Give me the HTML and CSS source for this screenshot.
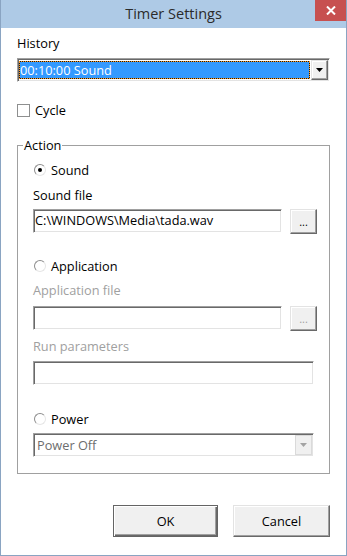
FILE: index.html
```html
<!DOCTYPE html>
<html lang="en">
  <head>
    <meta charset="UTF-8">
    <meta name="viewport" content="width=device-width, initial-scale=1.0">
    <title>Timer Settings</title>
    <link rel="stylesheet" href="styles.css">
  </head>
  <body>
    <div class="window">
        <div class="titlebar">
            <div class="title">Timer Settings</div>
            <div class="close-btn">
                <svg width="10" height="9" viewBox="0 0 10 9">
                    <path d="M1 0.5 L9 8.5 M9 0.5 L1 8.5" stroke="#fff" stroke-width="2" fill="none"/>
                </svg>
            </div>
        </div>

        <div class="content">
            <div class="label label-history">History</div>
            <div class="combo combo-active">
                <div class="combo-value">00:10:00 Sound</div>
                <div class="combo-btn">
                    <svg width="7" height="4" viewBox="0 0 7 4"><polygon points="0,0 7,0 3.5,4" fill="#000"/></svg>
                </div>
            </div>

            <div class="check-row">
                <span class="checkbox"></span>
                <span>Cycle</span>
            </div>

            <fieldset class="group">
                <legend>Action</legend>

                <div class="radio-row">
                    <span class="radio checked"></span>
                    <span>Sound</span>
                </div>
                <div class="label label-sub">Sound file</div>
                <div class="file-row">
                    <div class="textbox">C:\WINDOWS\Media\tada.wav</div>
                    <div class="btn btn-browse">...</div>
                </div>

                <div class="radio-row radio-gap">
                    <span class="radio"></span>
                    <span>Application</span>
                </div>
                <div class="label label-sub-app disabled">Application file</div>
                <div class="file-row file-row-app">
                    <div class="textbox"></div>
                    <div class="btn btn-browse disabled">...</div>
                </div>
                <div class="label label-params disabled">Run parameters</div>
                <div class="textbox textbox-wide"></div>

                <div class="radio-row radio-gap-power">
                    <span class="radio"></span>
                    <span>Power</span>
                </div>
                <div class="combo combo-disabled">
                    <div class="combo-text">Power Off</div>
                    <div class="combo-btn combo-btn-disabled">
                        <svg width="7" height="4" viewBox="0 0 7 4"><polygon points="0,0 7,0 3.5,4" fill="#a3a3a3"/></svg>
                    </div>
                </div>
            </fieldset>

            <div class="actions">
                <div class="btn btn-dialog btn-default">OK</div>
                <div class="btn btn-dialog btn-cancel">Cancel</div>
            </div>
        </div>
    </div>
  </body>
</html>
```

FILE: styles.css
```css
:root {
    --title-bg: #aecae6;
    --frame: #8aa4c2;
    --close-bg: #c75050;
    --face: #f0f0f0;
    --shadow-dark: #696969;
    --shadow: #a0a0a0;
    --light: #e3e3e3;
    --text-disabled: #a0a0a0;
}

body {
    margin: 0;
    font-family: "Open Sans", "Noto Sans", sans-serif;
    font-size: 12.75px;
    color: #000;
    background: #fff;
}

.window {
    width: 347px;
    height: 556px;
    box-sizing: border-box;
    border: 1px solid var(--frame);
    border-top: 0;
    overflow: hidden;
}

/* title bar */
.titlebar {
    height: 28px;
    background: var(--title-bg);
    display: grid;
    grid-template-columns: 1fr auto 1fr;
    align-items: start;
}

.title {
    grid-column: 2;
    font-size: 14.5px;
    line-height: 28px;
    color: #2b2b2b;
}

.close-btn {
    grid-column: 3;
    justify-self: end;
    width: 31px;
    height: 21px;
    background: var(--close-bg);
    display: flex;
    align-items: center;
    justify-content: center;
}

/* content */
.content {
    padding: 0 16px;
}

.label {
    line-height: 16px;
}

.label-history {
    margin-top: 7px;
}

.disabled {
    color: var(--text-disabled);
}

/* sunken controls */
.combo,
.textbox {
    box-sizing: border-box;
    height: 24px;
    border: 1px solid;
    border-color: var(--shadow) #fff #fff var(--shadow);
    box-shadow: inset 1px 1px 0 var(--shadow-dark), inset -1px -1px 0 var(--light);
    background: #fff;
}

.combo {
    display: flex;
    padding: 1px;
}

.combo-active {
    margin-top: 7px;
}

.combo-value {
    flex: 1;
    margin: 1px 1px 1px 0;
    border: 1px dotted #ff9a1f;
    background: linear-gradient(#3399ff, #3399ff) padding-box, #1b1b1b;
    color: #fff;
    line-height: 16px;
}

.combo-btn {
    width: 17px;
    box-sizing: border-box;
    background: var(--face);
    border: 1px solid;
    border-color: var(--light) var(--shadow-dark) var(--shadow-dark) var(--light);
    box-shadow: inset -1px -1px 0 var(--shadow), inset 1px 1px 0 #fff;
    display: flex;
    align-items: center;
    justify-content: center;
}

.combo-disabled {
    margin-top: 6px;
}

.combo-text {
    flex: 1;
    padding-left: 2px;
    line-height: 20px;
    color: #6d6d6d;
}

.combo-btn-disabled {
    border-color: #dadada;
    box-shadow: none;
}

/* checkbox */
.check-row {
    margin-top: 20px;
    display: flex;
    align-items: center;
    gap: 5px;
    line-height: 16px;
}

.checkbox {
    width: 13px;
    height: 13px;
    box-sizing: border-box;
    border: 1px solid #8e8f8f;
    background: #fff;
}

/* group box */
.group {
    margin: 20px 0 0;
    padding: 9px 15px 16px;
    border: 1px solid var(--shadow);
    min-width: 0;
}

.group legend {
    padding: 0 1px;
    margin-left: -10px;
    line-height: 15px;
}

.radio-row {
    display: flex;
    align-items: center;
    gap: 5px;
    line-height: 16px;
    padding-left: 1px;
}

.radio {
    width: 12px;
    height: 12px;
    box-sizing: border-box;
    border-radius: 50%;
    border: 1px solid;
    border-color: #8d8d8d #e6e6e6 #e6e6e6 #8d8d8d;
    background: #fff;
    display: flex;
    align-items: center;
    justify-content: center;
}

.radio.checked::after {
    content: '';
    width: 4px;
    height: 4px;
    border-radius: 50%;
    background: #000;
}

.radio-gap {
    margin-top: 24px;
}

.radio-gap-power {
    margin-top: 26px;
}

.label-sub {
    margin-top: 9px;
}

.label-sub-app {
    margin-top: 8px;
}

.label-params {
    margin-top: 7px;
}

.file-row {
    margin-top: 6px;
    display: flex;
    align-items: flex-start;
    gap: 8px;
}

.file-row-app {
    margin-top: 8px;
}

.file-row .textbox {
    width: 249px;
    flex-shrink: 0;
}

.textbox {
    padding-left: 1px;
    line-height: 20px;
    white-space: nowrap;
}

.textbox-wide {
    margin-top: 7px;
}

/* raised buttons */
.btn {
    box-sizing: border-box;
    background: var(--face);
    border: 1px solid;
    border-color: var(--light) var(--shadow-dark) var(--shadow-dark) var(--light);
    box-shadow: inset -1px -1px 0 var(--shadow), inset 1px 1px 0 #fff;
    display: flex;
    align-items: center;
    justify-content: center;
}

.btn-browse {
    width: 27px;
    height: 25px;
    flex-shrink: 0;
    font-size: 11px;
    padding-bottom: 1px;
}

.btn-browse.disabled {
    color: var(--text-disabled);
}

.actions {
    margin-top: 31px;
    display: flex;
    justify-content: flex-end;
    gap: 15px;
}

.btn-dialog {
    height: 32px;
}

.btn-default {
    width: 105px;
    border-color: #646464;
    box-shadow: inset 1px 1px 0 #fff, inset -1px -1px 0 var(--shadow-dark), inset -2px -2px 0 var(--shadow);
}

.btn-cancel {
    width: 97px;
}
```
